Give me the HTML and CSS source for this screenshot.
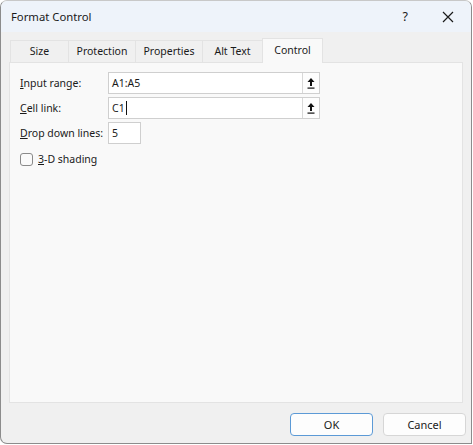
FILE: index.html
```html
<!DOCTYPE html>
<html lang="en">
<head>
    <meta charset="UTF-8">
    <title>Format Control</title>
    <link rel="stylesheet" href="styles.css">
</head>
<body>
    <div class="dialog">
        <div class="titlebar">
            <span class="title">Format Control</span>
            <span class="help">?</span>
            <svg class="close" width="12" height="12" viewBox="0 0 12 12">
                <path d="M1 1 L11 11 M11 1 L1 11" stroke="#1a1a1a" stroke-width="1.2" fill="none"/>
            </svg>
        </div>

        <div class="body">
            <div class="tabs">
                <div class="tab t-size">Size</div>
                <div class="tab t-prot">Protection</div>
                <div class="tab t-prop">Properties</div>
                <div class="tab t-alt">Alt Text</div>
                <div class="tab active">Control</div>
            </div>

            <div class="panel">
                <div class="row">
                    <label class="label"><u>I</u>nput range:</label>
                    <div class="field wide">
                        <span class="value">A1:A5</span>
                        <button class="picker">
                            <svg width="8" height="12" viewBox="0 0 8 12">
                                <path d="M4 1 L7.5 5 L5 5 L5 9 L3 9 L3 5 L0.5 5 Z" fill="#111"/>
                                <rect x="0.5" y="10.5" width="7" height="1.2" fill="#111"/>
                            </svg>
                        </button>
                    </div>
                </div>
                <div class="row">
                    <label class="label"><u>C</u>ell link:</label>
                    <div class="field wide">
                        <span class="value">C1<span class="caret"></span></span>
                        <button class="picker">
                            <svg width="8" height="12" viewBox="0 0 8 12">
                                <path d="M4 1 L7.5 5 L5 5 L5 9 L3 9 L3 5 L0.5 5 Z" fill="#111"/>
                                <rect x="0.5" y="10.5" width="7" height="1.2" fill="#111"/>
                            </svg>
                        </button>
                    </div>
                </div>
                <div class="row">
                    <label class="label"><u>D</u>rop down lines:</label>
                    <div class="field small">
                        <span class="value">5</span>
                    </div>
                </div>
                <div class="check-row">
                    <span class="checkbox"></span>
                    <span><u>3</u>-D shading</span>
                </div>
            </div>

            <div class="buttons">
                <button class="btn primary">OK</button>
                <button class="btn">Cancel</button>
            </div>
        </div>
    </div>
</body>
</html>
```

FILE: styles.css
```css
body {
    margin: 0;
    background-color: #ffffff;
    font-family: "Segoe UI", "Noto Sans", "Open Sans", sans-serif;
    font-size: 10.5px;
    color: #1a1a1a;
}

/* Window */
.dialog {
    width: 470px;
    height: 442px;
    border: 1px solid #8c8c8c;
    border-top-color: #c8c8c8;
    border-radius: 7px 7px 0 7px;
    overflow: hidden;
    display: flex;
    flex-direction: column;
    background-color: #f0f0f0;
}

.titlebar {
    height: 31px;
    background-color: #eef3fa;
    display: flex;
    align-items: center;
    padding-left: 10px;
}

.title {
    font-size: 11.3px;
    flex: 1;
}

.help {
    font-size: 12.5px;
    margin-right: 34px;
}

.close {
    margin-right: 17px;
}

.body {
    flex: 1;
    display: flex;
    flex-direction: column;
    padding: 7px 8px 0 8px;
}

/* Tabs */
.tabs {
    display: flex;
    align-items: flex-end;
    height: 23px;
    padding-left: 1px;
}

.tab {
    box-sizing: border-box;
    height: 22px;
    line-height: 21px;
    background-color: #f0f0f0;
    border: 1px solid #e3e3e3;
    border-bottom: none;
    border-right: none;
    text-align: center;
    white-space: nowrap;
}

.t-size { width: 58px; }
.t-prot { width: 67px; }
.t-prop { width: 67px; }
.t-alt { width: 60px; }

.tab.active {
    width: 61px;
    height: 25px;
    line-height: 22px;
    background-color: #f9f9f9;
    border-right: 1px solid #e3e3e3;
    position: relative;
    top: 1px;
}

.panel {
    height: 330px;
    background-color: #f9f9f9;
    border: 1px solid #e3e3e3;
    padding: 9px 0 0 10px;
}

.row {
    display: flex;
    align-items: center;
    margin-bottom: 3px;
}

.label {
    width: 88px;
    white-space: nowrap;
}

.field {
    height: 20px;
    background-color: #ffffff;
    border: 1px solid #cfcfcf;
    display: flex;
    align-items: center;
}

.field.wide {
    width: 210px;
}

.field.small {
    width: 31px;
}

.value {
    flex: 1;
    padding-left: 3px;
    display: flex;
    align-items: center;
}

.caret {
    display: inline-block;
    width: 1px;
    height: 14px;
    background-color: #111;
    margin-left: 1px;
}

.picker {
    width: 17px;
    height: 20px;
    margin: 0;
    padding: 0;
    border: none;
    border-left: 1px solid #d8d8d8;
    background-color: #fdfdfd;
    display: flex;
    align-items: center;
    justify-content: center;
}

.check-row {
    display: flex;
    align-items: center;
    margin-top: 8px;
}

.checkbox {
    width: 11px;
    height: 11px;
    border: 1px solid #8a8a8a;
    border-radius: 3px;
    background-color: #fafafa;
    margin-right: 5px;
}

/* Buttons */
.buttons {
    display: flex;
    justify-content: flex-end;
    gap: 10px;
    padding-top: 10px;
    margin-right: -3px;
}

.btn {
    width: 83px;
    height: 23px;
    font-family: inherit;
    font-size: 11px;
    color: #1a1a1a;
    background-color: #fdfdfd;
    border: 1px solid #d6d6d6;
    border-radius: 4px;
}

.btn.primary {
    border-color: #5c9ad6;
}
```
